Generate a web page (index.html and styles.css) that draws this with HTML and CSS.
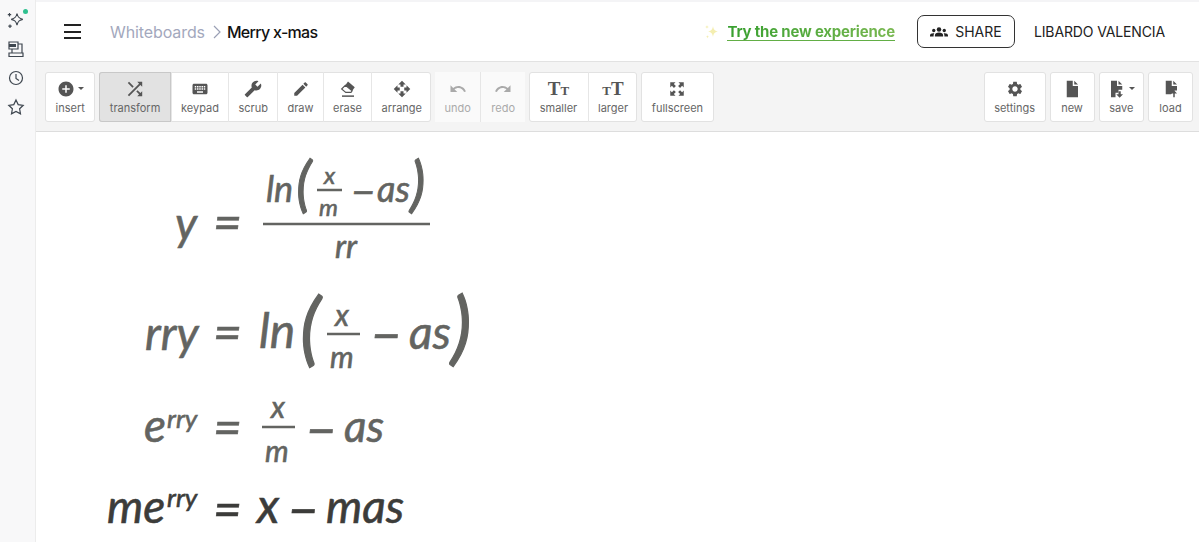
FILE: index.html
```html
<!DOCTYPE html>
<html lang="en">
<head>
    <meta charset="UTF-8">
    <meta name="viewport" content="width=device-width, initial-scale=1.0">
    <title>Merry x-mas</title>
    <link rel="icon" href="data:,">
    <link rel="stylesheet" href="styles.css">
</head>
<body>
    <!-- Left rail -->
    <aside class="rail">
        <span class="rail-item has-dot">
            <svg viewBox="0 0 20 20"><path class="line" d="M11 3.500c.8 3.800 2 5 5.800 5.800-3.800.8-5 2-5.800 5.800-.8-3.800-2-5-5.800-5.800 3.800-.8 5-2 5.800-5.800z"/><path class="line" d="M3.500 3v3.400M1.800 4.700h3.400M4 14.500v3.400M2.300 16.200h3.400"/></svg>
        </span>
        <span class="rail-item">
            <svg viewBox="0 0 20 20"><path class="line" d="M3 3h9v7H3zM12 5h4v9M6 10v4M3 17.500h14V14H3z"/><path class="fill" d="M3 5h7v3H3z"/></svg>
        </span>
        <span class="rail-item">
            <svg viewBox="0 0 20 20"><circle class="line" cx="10" cy="10" r="6.500"/><path class="line" d="M10 6v4.500l3 2"/></svg>
        </span>
        <span class="rail-item">
            <svg viewBox="0 0 20 20"><path class="line" d="M10 3l2.200 4.600 5 .7-3.600 3.500.9 5L10 14.400l-4.500 2.400.9-5-3.600-3.500 5-.7z"/></svg>
        </span>
    </aside>

    <div class="main">
        <!-- Header -->
        <header class="topbar">
            <span class="burger"><i></i><i></i><i></i></span>
            <nav class="crumbs">
                <a class="crumb-link">Whiteboards</a>
                <svg class="chevron" viewBox="0 0 8 14"><path d="M1 1l6 6-6 6"/></svg>
                <span class="crumb-current">Merry x-mas</span>
            </nav>
            <div class="topbar-right">
                <svg class="sparkle" viewBox="0 0 16 16"><path d="M9 2c.6 3.600 1.600 4.800 5 5.500-3.400.7-4.400 1.900-5 5.500-.6-3.600-1.600-4.800-5-5.500 3.400-.7 4.400-1.900 5-5.500z"/><path d="M3 1c.2 1.400.6 1.800 2 2-1.400.2-1.800.6-2 2-.2-1.400-.6-1.800-2-2 1.400-.2 1.800-.6 2-2zM3.500 11c.2 1.300.5 1.600 1.500 1.800-1 .2-1.300.5-1.500 1.800-.2-1.300-.5-1.600-1.500-1.800 1-.2 1.300-.5 1.500-1.800z"/></svg>
                <a class="try-link">Try the new experience</a>
                <button class="share-btn">
                    <svg viewBox="0 0 24 16"><circle cx="12" cy="4.500" r="3"/><circle cx="5" cy="6" r="2.200"/><circle cx="19" cy="6" r="2.200"/><path d="M6.500 14v-1.500C6.500 10 9 8.800 12 8.800s5.500 1.200 5.500 3.700V14zM0 14v-1.200c0-2 1.800-3 4.500-3 .6 0 1 .1 1.300.2-.6.700-1 1.500-1 2.500V14zM24 14v-1.200c0-2-1.800-3-4.500-3-.6 0-1 .1-1.300.2.600.7 1 1.500 1 2.500V14z"/></svg>
                    SHARE
                </button>
                <span class="user-name">LIBARDO VALENCIA</span>
            </div>
        </header>

        <!-- Toolbar -->
        <div class="toolbar">
            <div class="tool-group">
                <button class="tool roomy">
                    <span class="icon-row">
                        <svg class="icon" viewBox="0 0 24 24"><path d="M12 2C6.480 2 2 6.480 2 12s4.480 10 10 10 10-4.480 10-10S17.520 2 12 2zm5 11h-4v4h-2v-4H7v-2h4V7h2v4h4v2z"/></svg>
                        <i class="caret"></i>
                    </span>
                    insert
                </button>
            </div>
            <div class="tool-group">
                <button class="tool roomy active">
                    <svg class="icon" viewBox="2 2 20 20"><path d="M10.590 9.170L5.410 4 4 5.410l5.170 5.170 1.420-1.410zM14.500 4l2.040 2.040L4 18.590 5.410 20 17.960 7.460 20 9.500V4h-5.500zm.33 9.410l-1.410 1.410 3.130 3.130L14.500 20H20v-5.500l-2.040 2.040-3.130-3.130z"/></svg>
                    transform
                </button>
                <button class="tool">
                    <svg class="icon" viewBox="0 0 24 24"><path d="M20 5H4c-1.100 0-1.990.9-1.990 2L2 17c0 1.100.9 2 2 2h16c1.100 0 2-.9 2-2V7c0-1.100-.9-2-2-2zm-9 3h2v2h-2V8zm0 3h2v2h-2v-2zM8 8h2v2H8V8zm0 3h2v2H8v-2zm-1 2H5v-2h2v2zm0-3H5V8h2v2zm9 7H8v-2h8v2zm0-4h-2v-2h2v2zm0-3h-2V8h2v2zm3 3h-2v-2h2v2zm0-3h-2V8h2v2z"/></svg>
                    keypad
                </button>
                <button class="tool">
                    <svg class="icon flip" viewBox="0 0 24 24"><path d="M22.700 19l-9.100-9.100c.9-2.300.4-5-1.500-6.900-2-2-5-2.400-7.400-1.300L9 6 6 9 1.600 4.700C.4 7.100.9 10.100 2.900 12.100c1.900 1.900 4.600 2.400 6.900 1.500l9.100 9.100c.4.400 1 .4 1.400 0l2.300-2.300c.5-.4.5-1.100.1-1.400z"/></svg>
                    scrub
                </button>
                <button class="tool">
                    <svg class="icon" viewBox="0 0 24 24"><path d="M3 17.250V21h3.750L17.810 9.940l-3.750-3.750L3 17.250zM20.710 7.040c.39-.39.39-1.020 0-1.410l-2.340-2.340c-.39-.39-1.020-.39-1.410 0l-1.830 1.830 3.750 3.750 1.830-1.830z"/></svg>
                    draw
                </button>
                <button class="tool">
                    <svg class="icon" viewBox="0 0 24 24"><path d="M12 2l9 7.500-3.500 5-9-7.500z"/><path d="M8.500 7l9 7.500-1.500 2H9l-5.500-4.500z" fill="#fff" stroke="#555" stroke-width="1.500"/><path d="M4 20.500h16v2H4z"/></svg>
                    erase
                </button>
                <button class="tool">
                    <svg class="icon" viewBox="0 0 24 24"><path d="M10 9h4V6h3l-5-5-5 5h3v3zm-1 1H6V7l-5 5 5 5v-3h3v-4zm14 2l-5-5v3h-3v4h3v3l5-5zm-9 3h-4v3H7l5 5 5-5h-3v-3z"/></svg>
                    arrange
                </button>
            </div>
            <div class="tool-group">
                <button class="tool disabled">
                    <svg class="icon" viewBox="0 0 24 24"><path d="M12.500 8c-2.650 0-5.050.99-6.900 2.600L2 7v9h9l-3.620-3.620c1.390-1.160 3.160-1.880 5.120-1.880 3.540 0 6.550 2.310 7.600 5.500l2.370-.78C21.080 11.030 17.150 8 12.500 8z"/></svg>
                    undo
                </button>
                <button class="tool disabled">
                    <svg class="icon" viewBox="0 0 24 24"><path d="M18.400 10.600C16.550 8.990 14.150 8 11.500 8c-4.650 0-8.580 3.030-9.960 7.220L3.900 16c1.050-3.190 4.050-5.500 7.600-5.500 1.950 0 3.730.72 5.120 1.880L13 16h9V7l-3.600 3.600z"/></svg>
                    redo
                </button>
            </div>
            <div class="tool-group">
                <button class="tool roomy">
                    <span class="text-icon"><b>T</b><small>T</small></span>
                    smaller
                </button>
                <button class="tool">
                    <span class="text-icon"><small>T</small><b>T</b></span>
                    larger
                </button>
            </div>
            <div class="tool-group">
                <button class="tool roomy">
                    <svg class="icon" viewBox="0 0 24 24"><path d="M3 3h7L7.800 5.200l2.700 2.700-2.600 2.600-2.700-2.700L3 10zM21 3v7l-2.200-2.200-2.700 2.700-2.600-2.600 2.700-2.700L14 3zM3 21v-7l2.200 2.200 2.700-2.700 2.600 2.600-2.700 2.700L10 21zM21 21h-7l2.200-2.200-2.700-2.700 2.600-2.600 2.700 2.700L21 14z"/></svg>
                    fullscreen
                </button>
            </div>

            <div class="tool-spacer"></div>

            <div class="tool-group">
                <button class="tool roomy">
                    <svg class="icon" viewBox="0 0 24 24"><path d="M19.140 12.940c.04-.3.06-.61.06-.94 0-.32-.02-.64-.07-.94l2.030-1.580c.18-.14.23-.41.12-.61l-1.920-3.320c-.12-.22-.37-.29-.59-.22l-2.390.96c-.5-.38-1.030-.7-1.620-.94l-.36-2.540c-.04-.24-.24-.41-.48-.41h-3.840c-.24 0-.43.17-.47.41l-.36 2.540c-.59.24-1.130.57-1.620.94l-2.390-.96c-.22-.08-.47 0-.59.22L2.740 8.870c-.12.21-.08.47.12.61l2.030 1.580c-.05.3-.09.63-.09.94s.02.64.07.94l-2.030 1.580c-.18.14-.23.41-.12.61l1.920 3.320c.12.22.37.29.59.22l2.390-.96c.5.38 1.030.7 1.620.94l.36 2.540c.05.24.24.41.48.41h3.840c.24 0 .44-.17.47-.41l.36-2.540c.59-.24 1.130-.56 1.620-.94l2.390.96c.22.08.47 0 .59-.22l1.920-3.320c.12-.22.07-.47-.12-.61l-2.010-1.580zM12 15.600c-1.980 0-3.600-1.620-3.600-3.600s1.620-3.600 3.600-3.600 3.600 1.620 3.600 3.600-1.620 3.600-3.600 3.600z"/></svg>
                    settings
                </button>
            </div>
            <div class="tool-group">
                <button class="tool">
                    <svg class="icon" viewBox="0 0 24 24"><path d="M5 1h8v7h7v15H5zM15 1l5 5h-5z"/></svg>
                    new
                </button>
            </div>
            <div class="tool-group">
                <button class="tool">
                    <span class="icon-row">
                        <svg class="icon" viewBox="0 0 24 24"><path d="M4 1h8v7h7v5h-5v4h-4v6H4zM14 1l5 5h-5z"/><path d="M17 15v4h3l-4.500 4.500L11 19h3v-4z"/></svg>
                        <i class="caret"></i>
                    </span>
                    save
                </button>
            </div>
            <div class="tool-group">
                <button class="tool">
                    <svg class="icon" viewBox="0 0 24 24"><path d="M5 1h8v7h7v6h-3l-5 5H5zM15 1l5 5h-5z"/><path d="M17 23v-5h3l-4-4.500-4 4.500h3v5z"/></svg>
                    load
                </button>
            </div>
        </div>

        <!-- Whiteboard -->
        <svg class="board" viewBox="36 132 1163 410">
            <g class="eq">
                <text class="s46" x="175" y="240">y</text>
                <text class="s50" x="213" y="240">=</text>
                <text class="s36" x="266" y="202">ln</text>
                <text class="paren-s" x="296" y="205">(</text>
                <text class="s24" x="324" y="184">x</text>
                <line class="bar" x1="317" y1="190" x2="342" y2="190"/>
                <text class="s24" x="319" y="216">m</text>
                <text class="s42" x="351" y="207">−</text>
                <text class="s36" x="377" y="202">as</text>
                <text class="paren-s" x="410" y="205">)</text>
                <line class="bar" x1="263" y1="224" x2="430" y2="224"/>
                <text class="s32" x="335" y="258">rr</text>
            </g>
            <g class="eq">
                <text class="s46" x="145" y="350">rry</text>
                <text class="s50" x="213" y="350">=</text>
                <text class="s48" x="259" y="348">ln</text>
                <text class="paren-l" x="300" y="356">(</text>
                <text class="s30" x="335" y="326">x</text>
                <line class="bar" x1="327" y1="334" x2="360" y2="334"/>
                <text class="s30" x="330" y="368">m</text>
                <text class="s52" x="371" y="354">−</text>
                <text class="s46" x="409" y="349">as</text>
                <text class="paren-l" x="451" y="355">)</text>
            </g>
            <g class="eq">
                <text class="s46" x="144" y="442">e</text>
                <text class="s26" x="167" y="428">rry</text>
                <text class="s50" x="213" y="445">=</text>
                <text class="s30" x="271" y="418">x</text>
                <line class="bar" x1="262" y1="427" x2="295" y2="427"/>
                <text class="s30" x="265" y="462">m</text>
                <text class="s52" x="306" y="449">−</text>
                <text class="s44" x="344" y="442">as</text>
            </g>
            <g class="eq dark">
                <text class="s46" x="107" y="523">me</text>
                <text class="s26" x="167" y="507">rry</text>
                <text class="s50" x="213" y="527">=</text>
                <text class="s48" x="257" y="523">x</text>
                <text class="s52" x="288" y="529">−</text>
                <text class="s46" x="326" y="523">mas</text>
            </g>
        </svg>
    </div>
</body>
</html>
```

FILE: styles.css
```css
/* General styles */
* {
    box-sizing: border-box;
}

body {
    margin: 0;
    height: 100vh;
    display: flex;
    overflow: hidden;
    background-color: #fff;
    font-family: Inter, "Noto Sans", sans-serif;
}

/* Left rail */
.rail {
    width: 36px;
    flex-shrink: 0;
    padding-top: 10px;
    display: flex;
    flex-direction: column;
    align-items: center;
    gap: 9px;
    background-color: #f8f8f9;
    border-right: 1px solid #ececec;
}

.rail-item {
    position: relative;
    display: flex;
    width: 20px;
    height: 20px;
    margin-right: 3px;
}

.rail-item svg {
    width: 20px;
    height: 20px;
}

.rail-item .line {
    fill: none;
    stroke: #3f4750;
    stroke-width: 1.200;
}

.rail-item .fill {
    fill: #3f4750;
}

.has-dot::after {
    content: "";
    position: absolute;
    top: -1px;
    right: -2px;
    width: 5px;
    height: 5px;
    border-radius: 50%;
    background-color: #2fc08f;
}

.main {
    flex: 1;
    min-width: 0;
    display: flex;
    flex-direction: column;
    border-top: 2px solid #f4f4f6;
}

/* Header */
.topbar {
    height: 60px;
    flex-shrink: 0;
    display: flex;
    align-items: center;
    padding-left: 28px;
    padding-right: 34px;
    border-bottom: 1px solid #e2e2e2;
}

.burger {
    width: 17px;
    display: flex;
    flex-direction: column;
    gap: 4.500px;
    margin-right: 29px;
}

.burger i {
    height: 2px;
    background-color: #222;
}

.crumbs {
    display: flex;
    align-items: center;
    font-size: 16px;
}

.crumb-link {
    color: #a3a8bd;
    letter-spacing: -0.1px;
}

.chevron {
    width: 8px;
    height: 14px;
    margin: 0 6px 0 8px;
    fill: none;
    stroke: #9aa0b5;
    stroke-width: 1.200;
}

.crumb-current {
    color: #111;
    font-weight: 500;
    letter-spacing: -0.7px;
}

.topbar-right {
    margin-left: auto;
    display: flex;
    align-items: center;
}

.sparkle {
    width: 16px;
    height: 16px;
    margin-right: 7px;
    fill: #f4eeb0;
}

.try-link {
    font-size: 15px;
    font-weight: 700;
    letter-spacing: -0.2px;
    color: transparent;
    background: linear-gradient(90deg, #379f2f, #79b851);
    -webkit-background-clip: text;
    background-clip: text;
    border-bottom: 1px solid #62ae45;
    line-height: 17px;
}

.share-btn {
    width: 98px;
    height: 33px;
    margin-left: 22px;
    margin-right: 19px;
    display: flex;
    align-items: center;
    justify-content: center;
    gap: 7px;
    font-family: inherit;
    font-size: 14px;
    color: #222;
    background: #fff;
    border: 1px solid #333;
    border-radius: 7px;
}

.share-btn svg {
    width: 18px;
    height: 12px;
    fill: #222;
}

.user-name {
    font-size: 14px;
    letter-spacing: -0.13px;
    color: #222;
}

/* Toolbar */
.toolbar {
    height: 70px;
    flex-shrink: 0;
    display: flex;
    align-items: center;
    gap: 4px;
    padding: 0 6px 0 9px;
    background-color: #f4f4f4;
    border-bottom: 1px solid #ddd;
}

.tool-spacer {
    flex: 1;
}

.tool-group {
    height: 50px;
    display: flex;
    background-color: #fff;
    border-radius: 3px;
    box-shadow: inset 0 0 0 1px #e2e2e2;
}

.tool {
    min-width: 45px;
    padding: 8px 9.250px 0;
    display: flex;
    flex-direction: column;
    align-items: center;
    gap: 3px;
    font-family: inherit;
    font-size: 11px;
    line-height: 14px;
    color: #666;
    background: none;
    border: none;
    border-left: 1px solid #e6e6e6;
}

.tool.roomy {
    padding-left: 10.500px;
    padding-right: 10.500px;
}

.tool:first-child {
    border-left: none;
}

.tool.active {
    background-color: #e2e2e2;
    border-radius: 3px 0 0 3px;
    box-shadow: inset 0 0 0 1px #c8c8c8;
}

.tool.disabled {
    color: #aaa;
    background-color: #fafafa;
}

.tool.disabled .icon {
    fill: #aaa;
}

.icon-row {
    display: flex;
    align-items: center;
    gap: 3px;
}

.icon {
    width: 18px;
    height: 18px;
    fill: #555;
}

.flip {
    transform: scaleX(-1);
}

.caret {
    width: 0;
    height: 0;
    border-left: 3.500px solid transparent;
    border-right: 3.500px solid transparent;
    border-top: 3.500px solid #555;
}

.text-icon {
    height: 18px;
    line-height: 18px;
    color: #555;
    font-family: "Liberation Serif", serif;
    font-weight: 700;
}

.text-icon b {
    font-size: 19px;
}

.text-icon small {
    font-size: 13px;
}

/* Whiteboard */
.board {
    flex: 1;
    display: block;
    width: 100%;
    min-height: 0;
}

.eq {
    fill: #636461;
    stroke: #636461;
    stroke-width: 0.6;
    font-family: Lato, "Open Sans", sans-serif;
    font-style: italic;
}

.eq.dark {
    fill: #3c3c3a;
    stroke: #3c3c3a;
}

.bar {
    stroke: #636461;
    stroke-width: 2.500;
}

.s24 { font-size: 24px; }
.s26 { font-size: 26px; }
.s30 { font-size: 30px; }
.s32 { font-size: 32px; }
.s36 { font-size: 36px; }
.s42 { font-size: 42px; }
.s44 { font-size: 44px; }
.s46 { font-size: 46px; }
.s48 { font-size: 48px; }
.s50 { font-size: 50px; }
.s52 { font-size: 52px; }

.paren-s {
    font-size: 60px;
    stroke-width: 1;
}

.paren-l {
    font-size: 80px;
    stroke-width: 1.200;
}
```
